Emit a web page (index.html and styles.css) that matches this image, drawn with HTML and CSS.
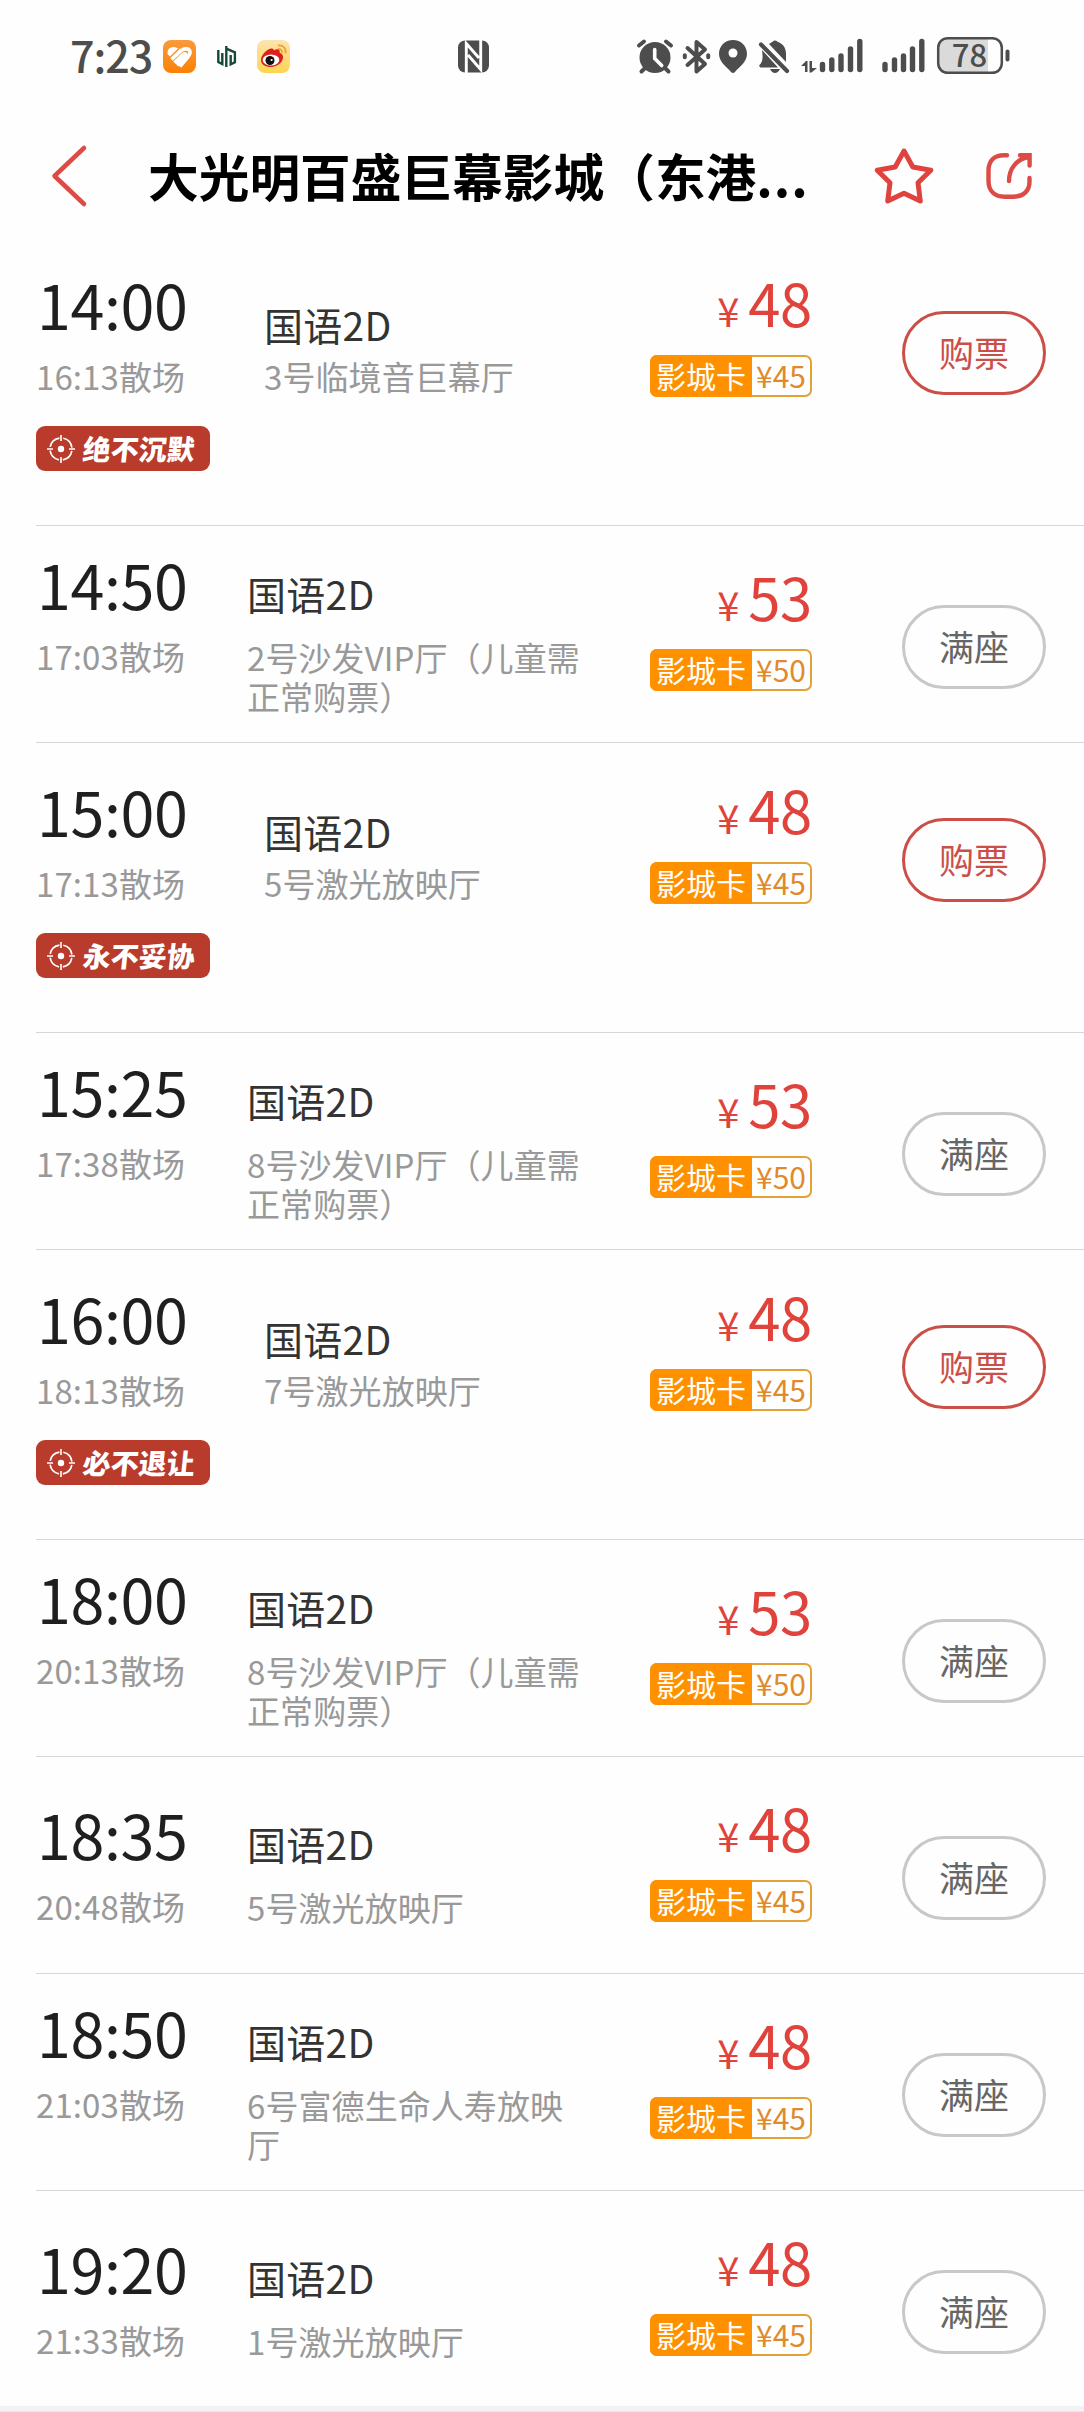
FILE: index.html
```html
<!DOCTYPE html>
<html lang="zh-CN">
<head>
<meta charset="utf-8">
<title>大光明百盛巨幕影城</title>
<link rel="stylesheet" href="styles.css">
</head>
<body>
<svg class="defs" width="0" height="0" aria-hidden="true">
  <symbol id="target" viewBox="0 0 28 28">
    <circle cx="14" cy="14" r="11" fill="none" stroke="#fff" stroke-width="1.7" stroke-dasharray="13.3 3.98" stroke-dashoffset="-2"/>
    <circle cx="14" cy="14" r="3.2" fill="#fff"/>
    <path d="M14 0v6M14 22v6M0 14h6M22 14h6" stroke="#fff" stroke-width="1.6"/>
  </symbol>
</svg>

<div class="status">
  <div class="status-left">
    <span class="clock">7:23</span>
    <svg width="33" height="33" viewBox="0 0 33 33">
      <defs><linearGradient id="og" x1="0" y1="0" x2="0" y2="1"><stop offset="0" stop-color="#f99a3c"/><stop offset="1" stop-color="#fb8104"/></linearGradient></defs>
      <rect width="33" height="33" rx="8" fill="url(#og)"/>
      <path d="M4.500 14Q4 7 11 7q2 0 4 1.500L7 16.500z" fill="#fff"/>
      <g fill="none" stroke="#fff" stroke-width="3.700">
        <path d="M8.500 19.500 17.500 10.800"/>
        <path d="M11.500 22.800 20 14.500q2.500-1.500 3 .500.300 1.200-1 2.500L14 25.200"/>
        <path d="M16 10.500h2.500C21 8 27 8 27 12.500q0 2-2 4.200L16.800 26.500"/>
      </g>
    </svg>
    <svg class="leaf" width="20" height="22" viewBox="0 0 20 22" fill="none" stroke="#154a36" stroke-width="2.400">
      <path d="M1.300 4v12l4 2V7M9.300 0v21M9.300 2.700l8.600 3.600v10l-4.200 2V9"/>
    </svg>
    <svg width="33" height="33" viewBox="0 0 33 33">
      <defs><linearGradient id="wb" x1="0" y1="0" x2="0" y2="1"><stop offset="0" stop-color="#fbe4b0"/><stop offset="1" stop-color="#ffd550"/></linearGradient></defs>
      <rect width="33" height="33" rx="8" fill="url(#wb)"/>
      <path d="M4 20c0-5 5.500-10.500 10-11.500 2-.400 3 .500 2.800 2C19 9 22 8.600 22.600 10.400c.400 1.300 0 2.400 0 2.400C25 13.500 26.500 15.500 26 18c-1 5.500-6.500 9-12 9S4 24.500 4 20z" fill="#dd2019"/>
      <ellipse cx="14" cy="20" rx="8.300" ry="5.600" fill="#fff"/>
      <circle cx="13" cy="20.500" r="4.500" fill="#111"/>
      <circle cx="14.600" cy="20" r="1.100" fill="#fff"/>
      <path d="M21 5.500c5-1 8.500 3 7.600 8M21 9c2.500-.500 4.500 1.500 4 4" fill="none" stroke="#eda338" stroke-width="1.800"/>
    </svg>
    <svg class="nfc" width="31" height="33" viewBox="0 0 31 33">
      <rect x="0" y="0.500" width="31" height="32" rx="7" fill="#4d4d4d"/>
      <path d="M8.300 33V3.500L21 18M22.700 0v29.500L10 15" fill="none" stroke="#fff" stroke-width="2.900"/>
    </svg>
  </div>
  <svg class="status-right" width="376" height="56" viewBox="636 28 376 56" fill="#4d4d4d" stroke-linecap="round">
    <circle cx="655" cy="57.500" r="15.500"/>
    <path d="M639 45.500l5-4M671 45.500l-5-4M645 68l-3.500 3.500M665 68l3.500 3.500" stroke="#4d4d4d" stroke-width="4"/>
    <path d="M654.700 49.500v9l7 7" stroke="#fff" stroke-width="3.600" fill="none"/>
    <path d="M687.500 48 705 64l-8.500 7.500V42l8.500 7.500L687.500 65M684.800 55.300v2M708.200 55.300v2" fill="none" stroke="#4d4d4d" stroke-width="4" stroke-linejoin="round"/>
    <path d="M733 40c-8 0-14 6-14 14 0 8 8 13 12 18q2 2 4 0c4-5 12-10 12-18 0-8-6-14-14-14z"/>
    <circle cx="733" cy="53" r="4.500" fill="#fff"/>
    <path d="M769 44l3.500-2.200q2.500-2.500 5 0C784 44 786 49 786 54v8zM762 50l16 17.500h-17.500q-2.500-2 0-3.500 2.500-3 2-9zM770 69h10q-2 4-5 4t-5-4z"/>
    <path d="M761 44.500 787 71" stroke="#4d4d4d" stroke-width="4.200"/>
    <path d="M801 66l5-5h1.500v11H805v-6zM809.500 61h2.500v7h5l-5.500 4.500h-2z"/>
    <path d="M822.500 64.500v5M831.800 60v9.500M841 56v13.500M850.500 49v20.500M859.800 41.500v28M885 64.500v5M894.500 60v9.500M903.500 56v13.500M912.500 49v20.500M921.800 41.500v28" stroke="#4d4d4d" stroke-width="5.400" fill="none"/>
    <path d="M947 39h41v33h-41q-8-1-8-8V47q0-7 8-8z" fill="#dadada"/>
    <rect x="938.200" y="38.200" width="63.600" height="34.600" rx="9.500" fill="none" stroke="#4d4d4d" stroke-width="2.500"/>
    <path d="M1007.500 51.500v8" stroke="#4d4d4d" stroke-width="4"/>
    <text x="969.500" y="66.700" text-anchor="middle" class="battery">78</text>
  </svg>
</div>

<header class="header">
  <svg width="40" height="66" viewBox="50 143 40 66" fill="none" stroke="#de4b45" stroke-width="4.500" stroke-linecap="round" stroke-linejoin="round"><path d="M84 148 54.500 176 84 204"/></svg>
  <h1 class="title">大光明百盛巨幕影城（东港<span class="dots">...</span></h1>
  <svg class="star" width="66" height="66" viewBox="871 142 66 66" fill="none" stroke="#e0433e" stroke-width="5" stroke-linejoin="round"><path d="M904 150l8.800 16 18 3.300-12.800 12.500 2.300 18.200-16.300-7.700-16.300 7.700 2.300-18.200-12.800-12.500 18-3.300z"/></svg>
  <svg class="share" width="50" height="66" viewBox="984 143 50 66" fill="none" stroke="#dd4b47" stroke-width="4.400" stroke-linecap="round"><path d="M1007 155.200h-3c-10 0-15.500 6-15.500 15.500v10c0 10 6 16 16 16h9c10 0 16-6 16-15v-3.700M1020 155.200h9.600v10.300M1028.500 157c-12 2-19.500 12-19.500 24"/></svg>
</header>

<main class="list">
  <section class="row tagged">
    <div class="time"><div class="start">14:00</div><div class="end">16:13散场</div><div class="tag"><svg width="28" height="28"><use href="#target"/></svg><span>绝不沉默</span></div></div>
    <div class="hall"><div class="lang">国语2D</div><div class="room">3号临境音巨幕厅</div></div>
    <div class="cost"><div class="price"><small>¥</small>48</div><div class="card"><b>影城卡</b><i>¥45</i></div></div>
    <button class="btn buy">购票</button>
  </section>
  <section class="row wrapped">
    <div class="time"><div class="start">14:50</div><div class="end">17:03散场</div></div>
    <div class="hall"><div class="lang">国语2D</div><div class="room">2号沙发VIP厅（儿童需正常购票）</div></div>
    <div class="cost"><div class="price"><small>¥</small>53</div><div class="card"><b>影城卡</b><i>¥50</i></div></div>
    <button class="btn">满座</button>
  </section>
  <section class="row tagged">
    <div class="time"><div class="start">15:00</div><div class="end">17:13散场</div><div class="tag"><svg width="28" height="28"><use href="#target"/></svg><span>永不妥协</span></div></div>
    <div class="hall"><div class="lang">国语2D</div><div class="room">5号激光放映厅</div></div>
    <div class="cost"><div class="price"><small>¥</small>48</div><div class="card"><b>影城卡</b><i>¥45</i></div></div>
    <button class="btn buy">购票</button>
  </section>
  <section class="row wrapped">
    <div class="time"><div class="start">15:25</div><div class="end">17:38散场</div></div>
    <div class="hall"><div class="lang">国语2D</div><div class="room">8号沙发VIP厅（儿童需正常购票）</div></div>
    <div class="cost"><div class="price"><small>¥</small>53</div><div class="card"><b>影城卡</b><i>¥50</i></div></div>
    <button class="btn">满座</button>
  </section>
  <section class="row tagged">
    <div class="time"><div class="start">16:00</div><div class="end">18:13散场</div><div class="tag"><svg width="28" height="28"><use href="#target"/></svg><span>必不退让</span></div></div>
    <div class="hall"><div class="lang">国语2D</div><div class="room">7号激光放映厅</div></div>
    <div class="cost"><div class="price"><small>¥</small>48</div><div class="card"><b>影城卡</b><i>¥45</i></div></div>
    <button class="btn buy">购票</button>
  </section>
  <section class="row wrapped">
    <div class="time"><div class="start">18:00</div><div class="end">20:13散场</div></div>
    <div class="hall"><div class="lang">国语2D</div><div class="room">8号沙发VIP厅（儿童需正常购票）</div></div>
    <div class="cost"><div class="price"><small>¥</small>53</div><div class="card"><b>影城卡</b><i>¥50</i></div></div>
    <button class="btn">满座</button>
  </section>
  <section class="row">
    <div class="time"><div class="start">18:35</div><div class="end">20:48散场</div></div>
    <div class="hall"><div class="lang">国语2D</div><div class="room">5号激光放映厅</div></div>
    <div class="cost"><div class="price"><small>¥</small>48</div><div class="card"><b>影城卡</b><i>¥45</i></div></div>
    <button class="btn">满座</button>
  </section>
  <section class="row wrapped">
    <div class="time"><div class="start">18:50</div><div class="end">21:03散场</div></div>
    <div class="hall"><div class="lang">国语2D</div><div class="room">6号富德生命人寿放映厅</div></div>
    <div class="cost"><div class="price"><small>¥</small>48</div><div class="card"><b>影城卡</b><i>¥45</i></div></div>
    <button class="btn">满座</button>
  </section>
  <section class="row last">
    <div class="time"><div class="start">19:20</div><div class="end">21:33散场</div></div>
    <div class="hall"><div class="lang">国语2D</div><div class="room">1号激光放映厅</div></div>
    <div class="cost"><div class="price"><small>¥</small>48</div><div class="card"><b>影城卡</b><i>¥45</i></div></div>
    <button class="btn">满座</button>
  </section>
</main>
<div class="section-gap"></div>
</body>
</html>
```
FILE: styles.css
```css
* { box-sizing: border-box; }
body {
  margin: 0;
  width: 1084px;
  height: 2412px;
  overflow: hidden;
  background: #fefefe;
  font-family: "Noto Sans CJK SC", sans-serif;
}
svg { display: block; flex: none; }
.defs { position: absolute; }

.status {
  display: flex;
  justify-content: space-between;
  height: 112px;
  padding: 0 72px 0 70px;
}
.status-left { display: flex; align-items: center; height: 113px; }
.clock {
  width: 93px;
  padding-bottom: 5px;
  font-size: 43px;
  font-weight: 500;
  line-height: 50px;
  letter-spacing: -1px;
  color: #4d4d4d;
}
.leaf { margin: 0 20px 0 21px; }
.nfc { margin-left: 168px; }
.status-right { margin-top: 28px; }
.battery { font: 500 31px "Noto Sans CJK SC", sans-serif; }

.header {
  display: flex;
  align-items: center;
  height: 124px;
  padding: 4px 50px 0;
}
.title {
  width: 680px;
  margin: 0 43px 0 58px;
  padding-bottom: 3px;
  font-size: 50.700px;
  font-weight: 700;
  line-height: 66px;
  color: #000;
  white-space: nowrap;
}
.dots { letter-spacing: 1px; }
.share { margin-left: 47px; }

.row {
  display: grid;
  grid-template-columns: 211px 343px 222px 144px;
  align-items: start;
  height: 217px;
  margin-left: 36px;
  border-bottom: 1px solid #d6d6d6;
}
.row.tagged { height: 290px; }
.row.last { height: 215px; border: 0; }

.time { padding-top: 47px; }
.wrapped .time { padding-top: 28px; }
.tagged .time { padding-top: 38px; }
.start {
  font-size: 61px;
  line-height: 60px;
  letter-spacing: -0.400px;
  text-indent: 1px;
  color: #1f1f1f;
}
.end {
  margin-top: 23px;
  font-size: 33px;
  line-height: 39px;
  letter-spacing: 0.100px;
  color: #999;
}
.tag {
  display: flex;
  align-items: center;
  width: 174px;
  height: 45px;
  margin-top: 30px;
  padding-left: 11px;
  gap: 8px;
  border-radius: 9px;
  background: #b83b2b;
  color: #fff;
}
.tag span {
  font-size: 28px;
  font-weight: 900;
  line-height: 45px;
  transform: skewX(-6deg);
}

.hall { padding-top: 66px; }
.wrapped .hall { padding-top: 47px; }
.tagged .hall { padding: 68px 0 0 17px; }
.lang { font-size: 39px; line-height: 40px; letter-spacing: 0.300px; color: #333; }
.room { margin-top: 25px; font-size: 33px; line-height: 39px; letter-spacing: 0.080px; color: #999; }
.tagged .room { margin-top: 13px; }

.cost {
  display: flex;
  flex-direction: column;
  align-items: flex-end;
  gap: 23px;
  padding-top: 40px;
}
.tagged .cost { padding-top: 36px; }
.price {
  display: flex;
  align-items: baseline;
  height: 60px;
  font-size: 58px;
  line-height: 60px;
  letter-spacing: -0.300px;
  color: #e0433c;
}
.price small { margin-right: 9px; font-size: 40px; }
.card {
  display: flex;
  width: 162px;
  height: 42px;
  border: 2px solid #e3a136;
  border-radius: 7px;
  background: #fff;
  font-size: 30px;
  line-height: 36px;
}
.card b {
  width: 102px;
  margin: -2px 0 -2px -2px;
  padding-top: 2px;
  border-radius: 7px 0 0 7px;
  background: #ff9100;
  color: #fff;
  font-weight: 400;
  text-align: center;
}
.card i { flex: 1; font-style: normal; text-align: center; color: #e08a2c; }

.btn {
  width: 144px;
  height: 84px;
  margin: 79px 0 0 90px;
  padding: 0 0 4px;
  border: 3px solid #c8c8c8;
  border-radius: 42px;
  background: transparent;
  color: #666;
  font: 400 35px "Noto Sans CJK SC", sans-serif;
}
.tagged .btn { margin-top: 75px; }
.btn.buy { border-color: #cb4f48; color: #cb4f48; }

.section-gap { height: 6px; background: #f3f3f3; border-bottom: 1px solid #e6e6e6; }
```
